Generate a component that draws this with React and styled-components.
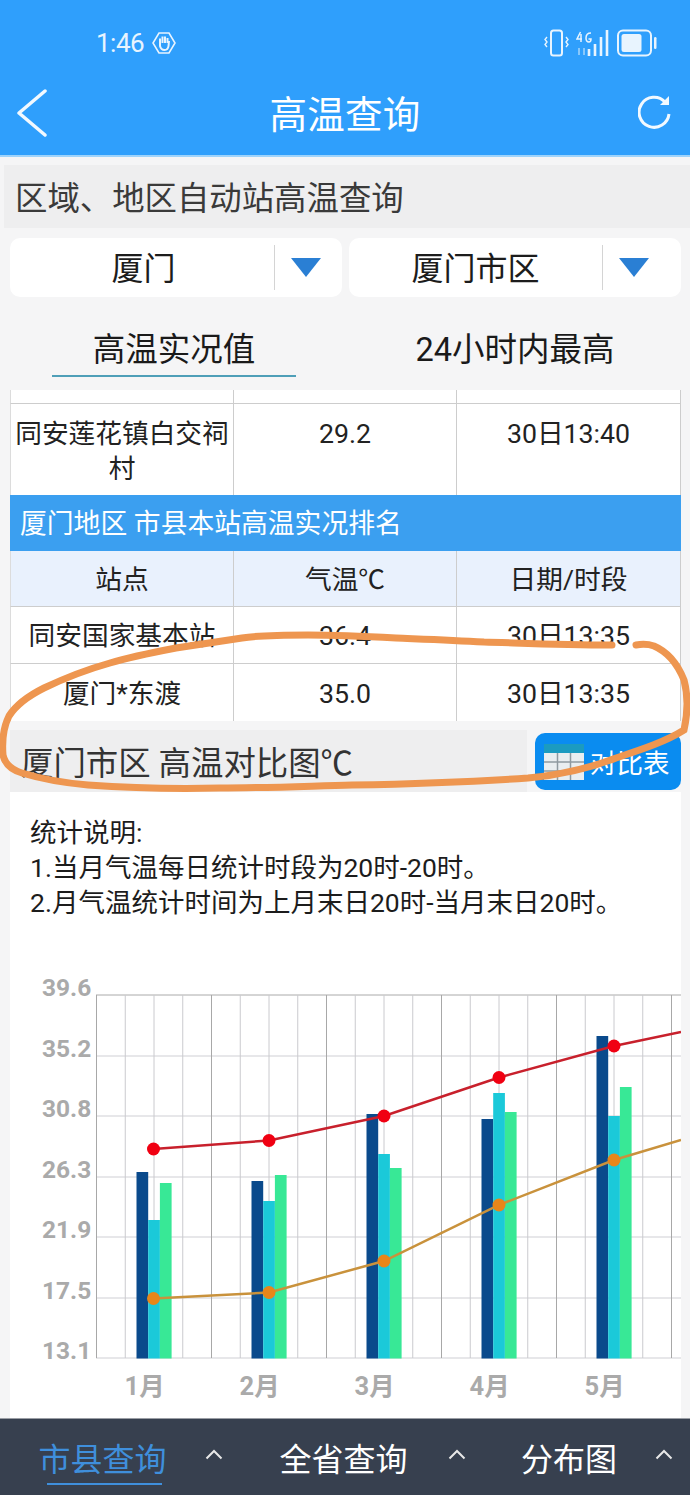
import React from 'react';
import styled, { createGlobalStyle } from 'styled-components';

const GlobalStyle = createGlobalStyle`
  html, body {
    margin: 0;
    padding: 0;
    background: #f5f5f6;
  }
`;

const Page = styled.div`
  position: relative;
  display: flex;
  flex-direction: column;
  width: 690px;
  height: 1495px;
  overflow: hidden;
  background: #f5f5f6;
  font-family: "Roboto", "Noto Sans CJK SC", sans-serif;
  color: #1c1c1c;
`;

// blue header
const Header = styled.header`
  flex: none;
  height: 155px;
  background: #2f9ffc;
  border-bottom: 2px solid #9ed3fb;
  box-sizing: content-box;
  color: #fff;
`;
const StatusBar = styled.div`
  display: flex;
  align-items: center;
  justify-content: space-between;
  height: 86px;
  padding: 0 33px 0 96px;
  box-sizing: border-box;
`;
const StatusLeft = styled.div`
  display: flex;
  align-items: center;
  gap: 8px;
  font-size: 26px;
  letter-spacing: -0.5px;
  color: #e8f4fe;
`;
const StatusRight = styled.div`
  display: flex;
  align-items: center;
  gap: 7px;
`;
const NavBar = styled.div`
  display: flex;
  align-items: center;
  justify-content: space-between;
  height: 59px;
  padding: 0 18px 0 16px;
  margin-top: -3px;
`;
const NavTitle = styled.h1`
  margin: 0;
  padding: 6px 0 0 4px;
  font-size: 37.5px;
  font-weight: 400;
  line-height: 59px;
  letter-spacing: 0.3px;
`;

const SectionTitle = styled.div`
  flex: none;
  display: flex;
  align-items: center;
  height: 63px;
  box-sizing: border-box;
  margin: 8px 0 0 4px;
  padding: 0 0 3px 11px;
  background: #eeeeef;
  font-size: 32.4px;
  color: #3a3a3a;
`;

const SelectRow = styled.div`
  flex: none;
  display: flex;
  gap: 7px;
  margin: 10px 9px 0 10px;
`;
const Select = styled.div`
  flex: 1;
  display: flex;
  align-items: center;
  height: 59px;
  border-radius: 10px;
  background: #fff;
`;
const SelectValue = styled.div`
  width: ${props => props.$width}px;
  height: 45px;
  box-sizing: border-box;
  padding: 2px 0 0 ${props => props.$inset || 0}px;
  line-height: 45px;
  text-align: center;
  font-size: 32px;
  border-right: 1px solid #d4d4d4;
`;
const SelectArrow = styled.span`
  width: 0;
  height: 0;
  margin-left: 16px;
  border-left: 15px solid transparent;
  border-right: 15px solid transparent;
  border-top: 19px solid #2a7fd4;
`;

const Tabs = styled.div`
  flex: none;
  display: flex;
  height: 93px;
  box-sizing: border-box;
  padding: 0 9px 0 52px;
`;
const Tab = styled.div`
  width: ${props => props.$width}px;
  height: 80px;
  margin-left: ${props => props.$offset || 0}px;
  padding-top: 30px;
  box-sizing: border-box;
  text-align: center;
  white-space: nowrap;
  font-size: 32.5px;
  line-height: 46px;
  color: #1a1a1a;
  border-bottom: 2px solid ${props => (props.$active ? '#4f9fb8' : 'transparent')};
`;

const Table = styled.div`
  flex: none;
  display: grid;
  grid-template-columns: 224px 223px 224px;
  margin: 0 9px 0 10px;
  background: #fff;
`;
const Cell = styled.div`
  display: flex;
  align-items: ${props => (props.$top ? 'flex-start' : 'center')};
  justify-content: center;
  height: ${props => props.$height}px;
  box-sizing: border-box;
  padding: ${props => (props.$top ? '13px 4px 0' : '3px 3px 0')};
  text-align: center;
  font-size: 26.7px;
  line-height: 35px;
  color: #222;
  background: ${props => (props.$head ? '#e9f1fd' : '#fff')};
  border-bottom: ${props => (props.$last ? 0 : '1px solid #cdcdcd')};
  border-right: 1px solid #cdcdcd;
  border-left: ${props => (props.$first ? '1px solid #dcdcdc' : 0)};
`;
const TableBanner = styled.div`
  grid-column: 1 / 4;
  height: 56px;
  box-sizing: border-box;
  padding: 3px 0 0 10px;
  line-height: 53px;
  background: #3b9ff0;
  color: #fff;
  font-size: 26.8px;
`;

const CompareRow = styled.div`
  flex: none;
  display: flex;
  align-items: flex-start;
  gap: 8px;
  margin: 9px 9px 0 10px;
`;
const CompareTitle = styled.div`
  width: 517px;
  height: 62px;
  box-sizing: border-box;
  padding: 6px 0 0 11px;
  line-height: 56px;
  background: #eeeeef;
  font-size: 32.4px;
  color: #333;
  white-space: nowrap;
`;
const CompareButton = styled.button`
  display: flex;
  align-items: center;
  gap: 6px;
  width: 146px;
  height: 57px;
  margin-top: 3px;
  padding: 0 0 0 9px;
  border: 0;
  border-radius: 10px;
  background: #0a8cf0;
  color: #fff;
  font-family: inherit;
  font-size: 26.5px;
`;

const ChartPanel = styled.section`
  flex: 1;
  display: flex;
  flex-direction: column;
  justify-content: space-between;
  margin: 0 9px 0 10px;
  background: #fff;
`;
const Notes = styled.div`
  padding: 23px 0 0 20px;
  font-size: 26.5px;
  line-height: 35px;
  color: #1c1c1c;
  white-space: nowrap;
`;
const Chart = styled.svg`
  display: block;
  flex: none;
`;
const AxisLabel = styled.text`
  fill: #aaaaaa;
  font-size: ${props => props.$size}px;
  font-weight: 700;
  font-family: "Roboto", "Noto Sans CJK SC", sans-serif;
`;

const BottomBar = styled.nav`
  flex: none;
  display: flex;
  height: 77px;
  box-sizing: border-box;
  background: #37404f;
  border-top: 1px solid #9a9ea5;
`;
const BottomItem = styled.div`
  position: relative;
  flex: none;
  display: flex;
  align-items: center;
  justify-content: center;
  width: ${props => props.$width}px;
  margin-left: ${props => props.$offset}px;
  font-size: 32px;
  white-space: nowrap;
  height: 66px;
  padding-top: 10px;
  box-sizing: border-box;
  color: ${props => (props.$active ? '#3f8fdc' : '#fff')};
  &::after {
    content: '';
    display: ${props => (props.$active ? 'block' : 'none')};
    position: absolute;
    left: 8px;
    right: 4px;
    bottom: 0;
    height: 2px;
    background: #3f8fdc;
  }
`;
const BottomCaret = styled.svg`
  flex: none;
  margin: 30px 0 0 ${props => props.$gap}px;
`;
const InkOverlay = styled.svg`
  position: absolute;
  left: 0;
  top: 0;
  pointer-events: none;
`;

const GRID_Y = [995, 1056, 1116, 1177, 1237, 1298, 1358];
const GRID_X = Array.from({ length: 21 }, (_, i) => 96.5 + i * 28.75);
const Y_LABELS = ['39.6', '35.2', '30.8', '26.3', '21.9', '17.5', '13.1'];
const BARS = [
  { x: 136.5, tops: [1172, 1220, 1183], label: '1月' },
  { x: 251.5, tops: [1181, 1201, 1175], label: '2月' },
  { x: 366.5, tops: [1114, 1154, 1168], label: '3月' },
  { x: 481.5, tops: [1119, 1093, 1112], label: '4月' },
  { x: 596.5, tops: [1036, 1116, 1087], label: '5月' },
];
const BAR_COLORS = ['#0a4a8c', '#1bc9d9', '#38e896'];
const RED = [[153.5, 1149], [269, 1140.5], [384, 1116], [499, 1077.5], [614, 1046]];
const ORANGE = [[153.5, 1298.5], [269, 1292.5], [384, 1261], [499, 1205], [614, 1160]];

const linePoints = (pts, end) => [...pts, end].map(p => p.join(',')).join(' ');

const TemperatureChart = () => (
  <Chart width="671" height="458" viewBox="10 960 671 458">
    {GRID_Y.map((y, i) => (
      <line key={y} x1="96" x2="681" y1={y} y2={y} stroke={i === 0 ? '#aaa' : '#cfcfd4'} strokeWidth="1" />
    ))}
    {GRID_X.map((x, i) => (
      <line key={x} x1={x} x2={x} y1="995" y2="1358" stroke={i % 4 === 0 ? '#a8a8a8' : '#cacace'} strokeWidth="1" />
    ))}
    {Y_LABELS.map((label, i) => (
      <AxisLabel key={label} $size={24.5} x="42" y={GRID_Y[i] + 1}>{label}</AxisLabel>
    ))}
    {BARS.map(bar => (
      <g key={bar.label}>
        {bar.tops.map((top, i) => (
          <rect key={i} x={bar.x + i * 11.7} y={top} width="11.7" height={1358.5 - top} fill={BAR_COLORS[i]} />
        ))}
        <AxisLabel $size={25.5} x={bar.x - 12} y="1395">{bar.label}</AxisLabel>
      </g>
    ))}
    <polyline points={linePoints(RED, [681, 1032])} fill="none" stroke="#c8202c" strokeWidth="2.5" />
    {RED.map(([x, y]) => <circle key={x} cx={x} cy={y} r="6.5" fill="#f00012" />)}
    <polyline points={linePoints(ORANGE, [681, 1140])} fill="none" stroke="#c9923c" strokeWidth="2.5" />
    {ORANGE.map(([x, y]) => <circle key={x} cx={x} cy={y} r="6.5" fill="#e8861a" />)}
  </Chart>
);

const Caret = ({ gap }) => (
  <BottomCaret $gap={gap} width="18" height="11" viewBox="0 0 18 11">
    <path d="M1.5 9.5 L9 2 L16.5 9.5" fill="none" stroke="#e8e8e8" strokeWidth="2" />
  </BottomCaret>
);

const App = () => (
  <Page>
    <GlobalStyle />
    <Header>
      <StatusBar>
        <StatusLeft>
          <span>1:46</span>
          <svg width="24" height="24" viewBox="0 0 24 24">
            <path d="M7 2 H17 L23 12 L17 22 H7 L1 12 Z" fill="none" stroke="#e8f4fe" strokeWidth="1.6" />
            <path d="M8 11 V7.5 M10.5 12 V5.5 M13 12 V5.5 M15.5 12 V7 M8 11 L8 15 Q9 19 12.5 19 Q16 19 16.5 15 L17 10" fill="none" stroke="#e8f4fe" strokeWidth="2" />
          </svg>
        </StatusLeft>
        <StatusRight>
          <svg width="25" height="28" viewBox="0 0 25 28">
            <rect x="7" y="1.5" width="11" height="25" rx="2.5" fill="none" stroke="#e8f4fe" strokeWidth="2" />
            <path d="M3 8 L1 10.5 L3 13 L1 15.5 L3 18 M22 8 L24 10.5 L22 13 L24 15.5 L22 18" fill="none" stroke="#e8f4fe" strokeWidth="1.4" />
          </svg>
          <svg width="34" height="28" viewBox="0 0 34 28">
            <path d="M13 27 V20 M19 27 V15 M25 27 V8 M31 27 V1" stroke="#e8f4fe" strokeWidth="2.6" />
            <path d="M3 26 V19 M8 19 V26" stroke="#9fd2fb" strokeWidth="1.6" />
            <path d="M4.5 3 L1 10 H6 M5 5 V13 M15 4 Q10 4 10 9 Q10 13 13 13 Q15 13 15 10 H12.5" fill="none" stroke="#e8f4fe" strokeWidth="1.5" />
          </svg>
          <svg width="40" height="28" viewBox="0 0 40 28">
            <rect x="1" y="1.5" width="33" height="25" rx="5" fill="none" stroke="#e8f4fe" strokeWidth="2" />
            <rect x="4.5" y="5" width="20" height="18" rx="2.5" fill="#e8f4fe" />
            <rect x="37" y="8" width="2.5" height="12" rx="1.2" fill="#e8f4fe" />
          </svg>
        </StatusRight>
      </StatusBar>
      <NavBar>
        <svg width="32" height="48" viewBox="0 0 32 48">
          <path d="M29 2 L3 24 L29 46" fill="none" stroke="#f2f9ff" strokeWidth="3.5" strokeLinecap="round" strokeLinejoin="round" />
        </svg>
        <NavTitle>高温查询</NavTitle>
        <svg width="34" height="36" viewBox="0 0 34 36">
          <path d="M27 7 A15 15 0 1 0 31 19" fill="none" stroke="#f2f9ff" strokeWidth="3" />
          <path d="M31 1 V10 H22 Z" fill="#f2f9ff" />
        </svg>
      </NavBar>
    </Header>

    <SectionTitle>区域、地区自动站高温查询</SectionTitle>

    <SelectRow>
      <Select>
        <SelectValue $width={265} $inset={3}>厦门</SelectValue>
        <SelectArrow />
      </Select>
      <Select>
        <SelectValue $width={254}>厦门市区</SelectValue>
        <SelectArrow />
      </Select>
    </SelectRow>

    <Tabs>
      <Tab $active $width={244}>高温实况值</Tab>
      <Tab $width={240} $offset={99}>24小时内最高</Tab>
    </Tabs>

    <Table>
      <Cell $height={14} $first />
      <Cell $height={14} />
      <Cell $height={14} />
      <Cell $height={91} $first $last $top>同安莲花镇白交祠村</Cell>
      <Cell $height={91} $last $top>29.2</Cell>
      <Cell $height={91} $last $top>30日13:40</Cell>
      <TableBanner>厦门地区 市县本站高温实况排名</TableBanner>
      <Cell $height={56} $head $first>站点</Cell>
      <Cell $height={56} $head>气温℃</Cell>
      <Cell $height={56} $head>日期/时段</Cell>
      <Cell $height={57} $first>同安国家基本站</Cell>
      <Cell $height={57}>36.4</Cell>
      <Cell $height={57}>30日13:35</Cell>
      <Cell $height={57} $first $last>厦门*东渡</Cell>
      <Cell $height={57} $last>35.0</Cell>
      <Cell $height={57} $last>30日13:35</Cell>
    </Table>

    <CompareRow>
      <CompareTitle>厦门市区 高温对比图℃</CompareTitle>
      <CompareButton>
        <svg width="40" height="36" viewBox="0 0 40 36">
          <rect x="0" y="0" width="40" height="36" fill="#e9eef0" />
          <rect x="0" y="0" width="40" height="9" fill="#1b9bc0" />
          <path d="M13.5 9 V36 M26.5 9 V36 M0 18 H40 M0 27 H40" stroke="#8f9aa0" strokeWidth="1.5" />
        </svg>
        <span>对比表</span>
      </CompareButton>
    </CompareRow>

    <ChartPanel>
      <Notes>
        <div>统计说明:</div>
        <div>1.当月气温每日统计时段为20时-20时。</div>
        <div>2.月气温统计时间为上月末日20时-当月末日20时。</div>
      </Notes>
      <TemperatureChart />
    </ChartPanel>

    <BottomBar>
      <BottomItem $active $width={127} $offset={39}>市县查询</BottomItem>
      <Caret gap={39} />
      <BottomItem $width={127} $offset={57}>全省查询</BottomItem>
      <Caret gap={41} />
      <BottomItem $width={96} $offset={55}>分布图</BottomItem>
      <Caret gap={38} />
    </BottomBar>

    <InkOverlay width="690" height="1495" viewBox="0 0 690 1495">
      <path
        d="M612 645 C560 645 520 643 484 642 C450 640 420 639 396 638 C360 636 335 635 308 635 C280 635 260 635 242 638 C215 642 195 645 176 648 C150 653 130 657 110 663 C85 670 65 678 44 688 C28 696 16 705 9 716 C3 728 2 742 3 755 C5 764 12 770 22 773 C45 780 65 783 88 785 C130 788 175 789 220 788 C265 788 310 786 352 785 C410 784 470 782 528 778 C560 775 590 768 616 758 C640 750 665 742 684 730 C688 712 688 695 684 680 C678 665 668 652 654 646 C648 644 642 644 636 645"
        fill="none"
        stroke="#ee9650"
        strokeWidth="7"
        strokeLinecap="round"
      />
    </InkOverlay>
  </Page>
);

export default App;
